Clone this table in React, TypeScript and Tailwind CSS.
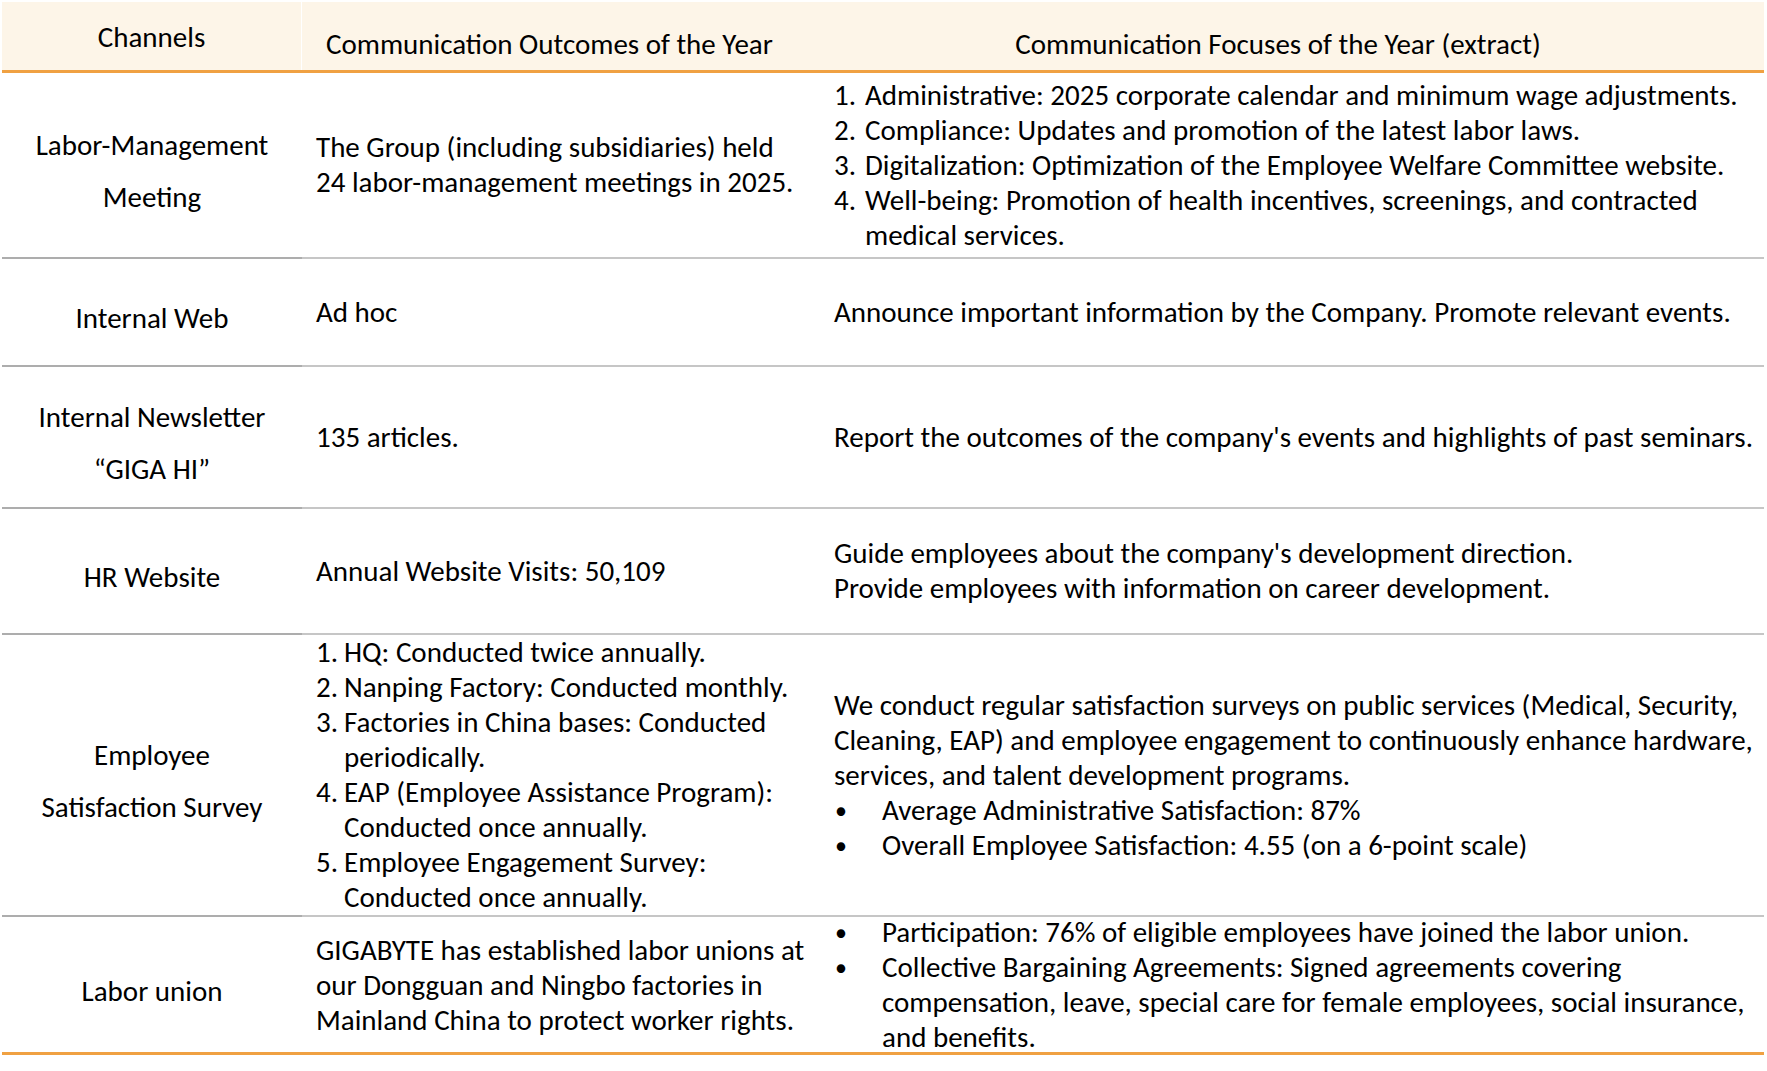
import React from 'react';

const FONT = { fontFamily: 'Carlito, Lato, "Liberation Sans", sans-serif' };

const Numbered = ({ n, children, w }: { n: string; children: React.ReactNode; w: string }) => (
  <div className="flex">
    <span className={`${w} shrink-0`}>{n}</span>
    <span>{children}</span>
  </div>
);

const Bullet = ({ children }: { children: React.ReactNode }) => (
  <div className="flex">
    <span className="w-[48px] shrink-0 pl-[1px] text-[24px]">•</span>
    <span>{children}</span>
  </div>
);

const Channel = ({ children }: { children: React.ReactNode }) => (
  <div className="flex items-center justify-center border-b-2 border-[#adadad] pt-[12px] text-center leading-[52px]">
    <div>{children}</div>
  </div>
);

const Cell = ({ children, last }: { children: React.ReactNode; last?: boolean }) => (
  <div
    className={
      last
        ? 'flex items-center whitespace-nowrap pl-[14px] leading-[35px]'
        : 'flex items-center whitespace-nowrap border-b-2 border-[#c6c6c6] pl-[14px] leading-[35px]'
    }
  >
    <div>{children}</div>
  </div>
);

export default function App() {
  return (
    <div className="min-h-screen w-full bg-white text-[29px] text-black" style={FONT}>
      <div className="ml-[2px] w-[1762px] pt-[2px]">
        {/* header */}
        <div className="grid h-[71px] grid-cols-[300px_518px_944px] border-b-[3px] border-[#f0a142] bg-[#fdf5e8]">
          <div className="flex items-center justify-center border-r border-white pt-[4px]">Channels</div>
          <div className="flex items-center pl-[24px] pt-[18px]">Communication Outcomes of the Year</div>
          <div className="flex items-center justify-center pr-[28px] pt-[18px]">Communication Focuses of the Year (extract)</div>
        </div>

        {/* Labor-Management Meeting */}
        <div className="grid h-[186px] grid-cols-[300px_518px_944px]">
          <Channel>
            Labor-Management
            <br />
            Meeting
          </Channel>
          <Cell>
            The Group (including subsidiaries) held
            <br />
            24 labor-management meetings in 2025.
          </Cell>
          <Cell>
            <Numbered n="1." w="w-[31px]">Administrative: 2025 corporate calendar and minimum wage adjustments.</Numbered>
            <Numbered n="2." w="w-[31px]">Compliance: Updates and promotion of the latest labor laws.</Numbered>
            <Numbered n="3." w="w-[31px]">Digitalization: Optimization of the Employee Welfare Committee website.</Numbered>
            <Numbered n="4." w="w-[31px]">
              Well-being: Promotion of health incentives, screenings, and contracted
              <br />
              medical services.
            </Numbered>
          </Cell>
        </div>

        {/* Internal Web */}
        <div className="grid h-[108px] grid-cols-[300px_518px_944px]">
          <Channel>Internal Web</Channel>
          <Cell>Ad hoc</Cell>
          <Cell>Announce important information by the Company. Promote relevant events.</Cell>
        </div>

        {/* Internal Newsletter */}
        <div className="grid h-[142px] grid-cols-[300px_518px_944px]">
          <Channel>
            Internal Newsletter
            <br />
            “GIGA HI”
          </Channel>
          <Cell>135 articles.</Cell>
          <Cell>Report the outcomes of the company's events and highlights of past seminars.</Cell>
        </div>

        {/* HR Website */}
        <div className="grid h-[126px] grid-cols-[300px_518px_944px]">
          <Channel>HR Website</Channel>
          <Cell>Annual Website Visits: 50,109</Cell>
          <Cell>
            Guide employees about the company's development direction.
            <br />
            Provide employees with information on career development.
          </Cell>
        </div>

        {/* Employee Satisfaction Survey */}
        <div className="grid h-[280px] grid-cols-[300px_518px_944px]">
          <Channel>
            Employee
            <br />
            Satisfaction Survey
          </Channel>
          <Cell>
            <Numbered n="1." w="w-[28px]">HQ: Conducted twice annually.</Numbered>
            <Numbered n="2." w="w-[28px]">Nanping Factory: Conducted monthly.</Numbered>
            <Numbered n="3." w="w-[28px]">
              Factories in China bases: Conducted
              <br />
              periodically.
            </Numbered>
            <Numbered n="4." w="w-[28px]">
              EAP (Employee Assistance Program):
              <br />
              Conducted once annually.
            </Numbered>
            <Numbered n="5." w="w-[28px]">
              Employee Engagement Survey:
              <br />
              Conducted once annually.
            </Numbered>
          </Cell>
          <Cell>
            We conduct regular satisfaction surveys on public services (Medical, Security,
            <br />
            Cleaning, EAP) and employee engagement to continuously enhance hardware,
            <br />
            services, and talent development programs.
            <Bullet>Average Administrative Satisfaction: 87%</Bullet>
            <Bullet>Overall Employee Satisfaction: 4.55 (on a 6-point scale)</Bullet>
          </Cell>
        </div>

        {/* Labor union */}
        <div className="grid h-[140px] grid-cols-[300px_518px_944px] border-b-[3px] border-[#f0a142]">
          <div className="flex items-center justify-center pt-[12px] text-center leading-[52px]">Labor union</div>
          <Cell last>
            GIGABYTE has established labor unions at
            <br />
            our Dongguan and Ningbo factories in
            <br />
            Mainland China to protect worker rights.
          </Cell>
          <Cell last>
            <Bullet>Participation: 76% of eligible employees have joined the labor union.</Bullet>
            <Bullet>
              Collective Bargaining Agreements: Signed agreements covering
              <br />
              compensation, leave, special care for female employees, social insurance,
              <br />
              and benefits.
            </Bullet>
          </Cell>
        </div>
      </div>
    </div>
  );
}
